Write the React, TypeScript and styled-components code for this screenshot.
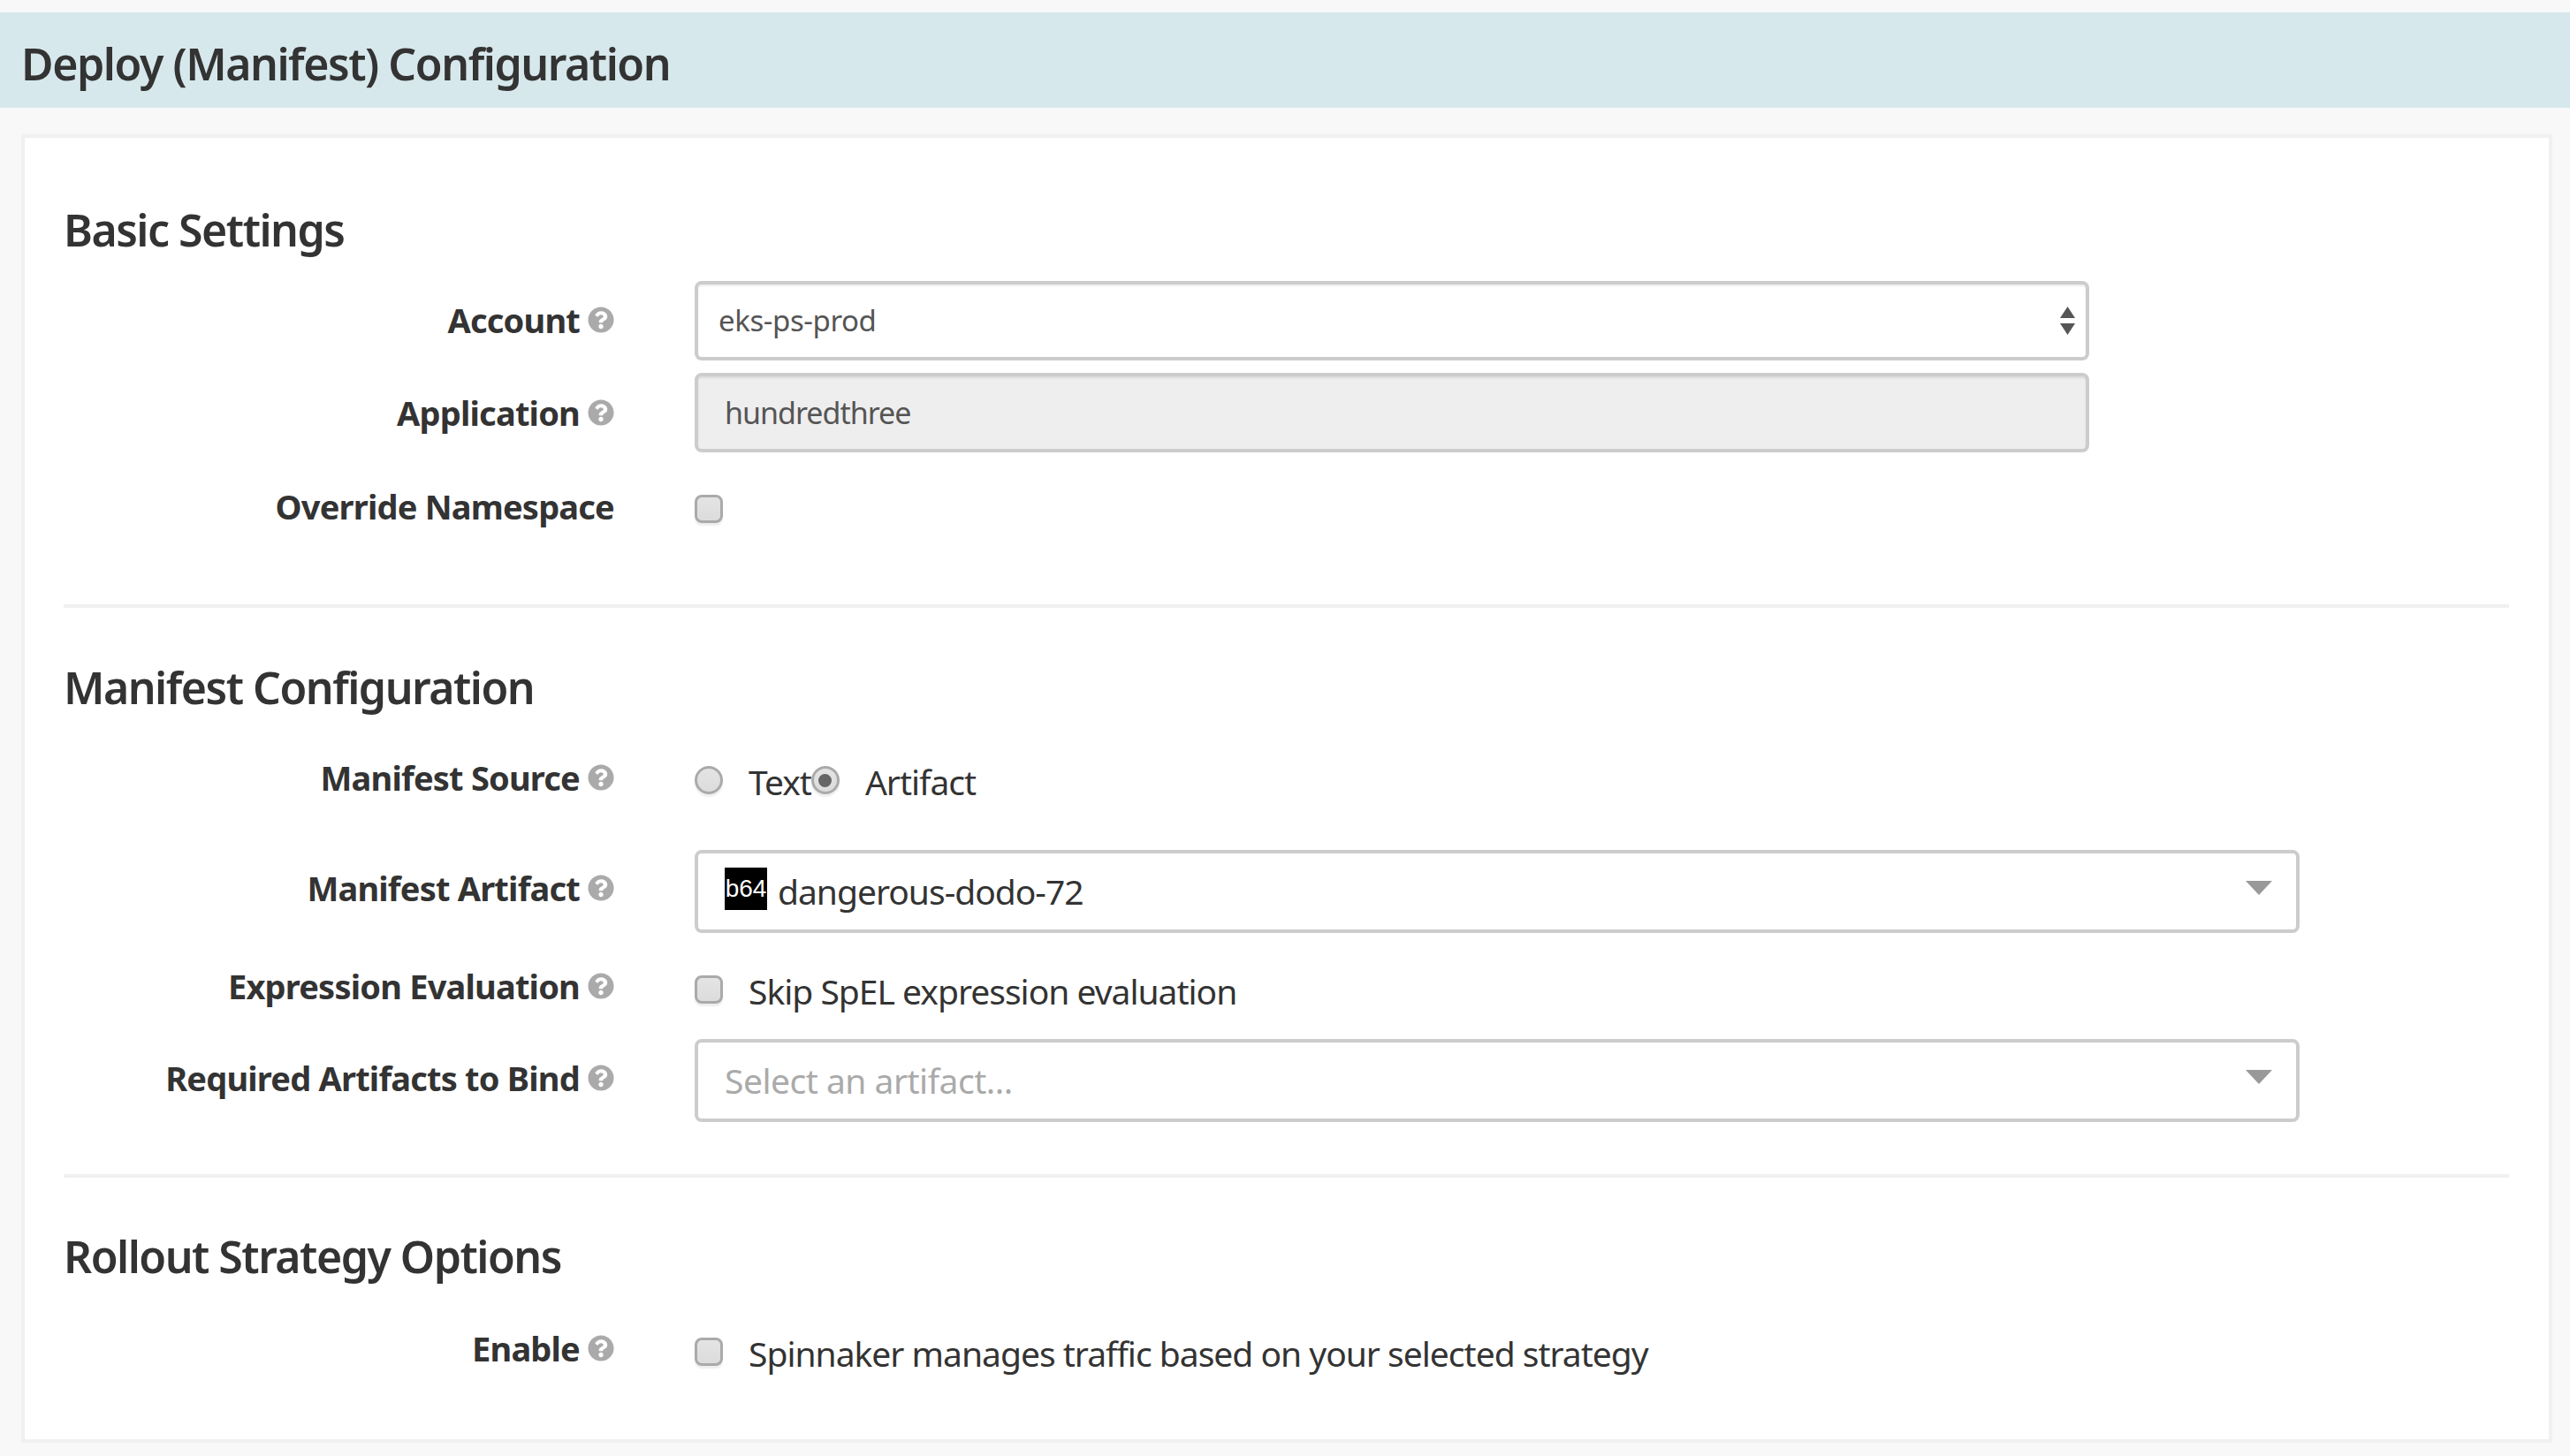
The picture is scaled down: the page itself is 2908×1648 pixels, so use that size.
import React from 'react';
import styled, { createGlobalStyle } from 'styled-components';
import { FaQuestionCircle } from 'react-icons/fa';

const GlobalStyle = createGlobalStyle`
  html, body {
    margin: 0;
    padding: 0;
    background: #f8f8f8;
  }
  * {
    box-sizing: border-box;
  }
`;

const HelpIcon = () => (
  <Help>
    <FaQuestionCircle />
  </Help>
);

const Caret = () => (
  <CaretIcon viewBox="0 0 30 16">
    <path d="M0 0 H30 L15 16 Z" fill="#999" />
  </CaretIcon>
);

const Stepper = () => (
  <StepperIcon viewBox="0 0 17 32">
    <path d="M8.5 0 L17 13 H0 Z" fill="#555" />
    <path d="M0 19 H17 L8.5 32 Z" fill="#555" />
  </StepperIcon>
);

const App = () => (
  <Page>
    <GlobalStyle />
    <Header>Deploy (Manifest) Configuration</Header>
    <Card>
      <SectionTitle $top={74}>Basic Settings</SectionTitle>
      <Row $top={28}>
        <Label $lift={2}>
          Account
          <HelpIcon />
        </Label>
        <Field $width={1578} $inset>
          <SmallValue>eks-ps-prod</SmallValue>
          <Stepper />
        </Field>
      </Row>
      <Row $top={14}>
        <Label>
          Application
          <HelpIcon />
        </Label>
        <Field $width={1578} $inset $disabled>
          <DisabledValue>hundredthree</DisabledValue>
        </Field>
      </Row>
      <Row $top={44}>
        <Label $lift={10}>Override Namespace</Label>
        <Checkbox />
      </Row>
      <Divider $top={84} />

      <SectionTitle $top={60}>Manifest Configuration</SectionTitle>
      <Row $top={55}>
        <Label $lift={10}>
          Manifest Source
          <HelpIcon />
        </Label>
        <Choice>
          <Radio />
          <ChoiceText>Text</ChoiceText>
          <Radio $checked />
          <ChoiceText>Artifact</ChoiceText>
        </Choice>
      </Row>
      <Row $top={55}>
        <Label $lift={8}>
          Manifest Artifact
          <HelpIcon />
        </Label>
        <Field $width={1816} $tall>
          <Base64Badge>b64</Base64Badge>
          <Value>dangerous-dodo-72</Value>
          <Caret />
        </Field>
      </Row>
      <Row $top={44}>
        <Label $lift={12}>
          Expression Evaluation
          <HelpIcon />
        </Label>
        <Choice>
          <Checkbox />
          <ChoiceText>Skip SpEL expression evaluation</ChoiceText>
        </Choice>
      </Row>
      <Row $top={32}>
        <Label $lift={6}>
          Required Artifacts to Bind
          <HelpIcon />
        </Label>
        <Field $width={1816} $tall>
          <Placeholder>Select an artifact...</Placeholder>
          <Caret />
        </Field>
      </Row>
      <Divider $top={59} />

      <SectionTitle $top={59}>Rollout Strategy Options</SectionTitle>
      <Row $top={58}>
        <Label $lift={12}>
          Enable
          <HelpIcon />
        </Label>
        <Choice>
          <Checkbox />
          <ChoiceText>Spinnaker manages traffic based on your selected strategy</ChoiceText>
        </Choice>
      </Row>
    </Card>
  </Page>
);

export default App;

const Page = styled.div`
  width: 2908px;
  min-height: 1648px;
  padding-top: 14px;
  overflow: hidden;
  background: #f8f8f8;
  color: #333;
  font-family: 'Noto Sans', sans-serif;
`;

const Header = styled.div`
  height: 108px;
  padding: 8px 0 0 24px;
  display: flex;
  align-items: center;
  background: #d7e8ec;
  font-size: 50px;
  font-weight: 600;
  letter-spacing: -1.45px;
`;

const Card = styled.div`
  margin: 30px 20px 0 24px;
  padding: 0 45px 75px 44px;
  background: #fff;
  border: 4px solid #f0f0f0;
`;

const SectionTitle = styled.div<{ $top: number }>`
  margin-top: ${({ $top }) => $top}px;
  height: 60px;
  line-height: 60px;
  font-size: 50px;
  font-weight: 600;
  letter-spacing: -1.5px;
`;

const Row = styled.div<{ $top: number }>`
  margin-top: ${({ $top }) => $top}px;
  min-height: 44px;
  display: grid;
  grid-template-columns: 623px 1fr;
  column-gap: 91px;
  align-items: center;
`;

const Label = styled.div<{ $lift?: number }>`
  display: flex;
  justify-content: flex-end;
  align-items: center;
  gap: 9px;
  padding-bottom: ${({ $lift = 0 }) => $lift}px;
  font-size: 38px;
  line-height: 32px;
  font-weight: 700;
  letter-spacing: -0.8px;
  white-space: nowrap;
`;

const Help = styled.span`
  display: inline-flex;
  font-size: 30px;
  color: #aaa;
`;

const Field = styled.div<{ $width: number; $tall?: boolean; $inset?: boolean; $disabled?: boolean }>`
  width: ${({ $width }) => $width}px;
  height: ${({ $tall }) => ($tall ? 94 : 90)}px;
  padding: 0 ${({ $tall }) => ($tall ? 27 : 12)}px 0 ${({ $tall, $disabled }) => ($tall || $disabled ? 30 : 23)}px;
  display: flex;
  align-items: center;
  border: 4px solid #ccc;
  border-radius: 8px;
  background: ${({ $disabled }) => ($disabled ? '#eee' : '#fff')};
  box-shadow: ${({ $inset }) => ($inset ? 'inset 0 2px 2px rgba(0, 0, 0, 0.08)' : 'none')};
`;

const SmallValue = styled.span`
  flex: 1;
  margin-bottom: 2px;
  font-size: 33px;
  letter-spacing: -0.4px;
  color: #555;
`;

const DisabledValue = styled(SmallValue)`
  margin-bottom: 0;
  font-size: 34px;
  letter-spacing: -1px;
`;

const Value = styled.span`
  flex: 1;
  margin-bottom: 2px;
  font-size: 39px;
  letter-spacing: -1px;
  color: #333;
`;

const Placeholder = styled(Value)`
  letter-spacing: -0.5px;
  color: #aaa;
`;

const Base64Badge = styled.span`
  width: 48px;
  height: 48px;
  margin: 0 12px 6px 0;
  display: flex;
  align-items: center;
  justify-content: center;
  background: #000;
  color: #fff;
  font-family: 'Liberation Sans', sans-serif;
  font-size: 28px;
  line-height: 1;
`;

const CaretIcon = styled.svg`
  width: 30px;
  height: 16px;
  margin-bottom: 8px;
`;

const StepperIcon = styled.svg`
  width: 17px;
  height: 32px;
`;

const Checkbox = styled.span`
  width: 32px;
  height: 32px;
  margin-bottom: 4px;
  flex: none;
  display: block;
  background: linear-gradient(#e4e4e4, #dcdcdc);
  border: 3px solid #aaa;
  border-radius: 8px;
  box-shadow: 0 3px 2px #eee;
`;

const Radio = styled.span<{ $checked?: boolean }>`
  width: 32px;
  height: 32px;
  margin-bottom: 4px;
  flex: none;
  display: flex;
  align-items: center;
  justify-content: center;
  border: 3px solid #aaa;
  border-radius: 50%;
  background: linear-gradient(#e4e4e4, #dcdcdc);
  box-shadow: 0 3px 2px #eee;

  &::after {
    content: '';
    display: ${({ $checked }) => ($checked ? 'block' : 'none')};
    width: 15px;
    height: 15px;
    border-radius: 50%;
    background: #666;
  }
`;

const Choice = styled.div`
  display: flex;
  align-items: center;
`;

const ChoiceText = styled.span`
  margin-left: 29px;
  font-size: 39px;
  line-height: 44px;
  letter-spacing: -1px;
  color: #333;

  & + ${Radio} {
    margin-left: 0;
  }
`;

const Divider = styled.div<{ $top: number }>`
  margin-top: ${({ $top }) => $top}px;
  height: 4px;
  background: #f0f0f0;
`;
